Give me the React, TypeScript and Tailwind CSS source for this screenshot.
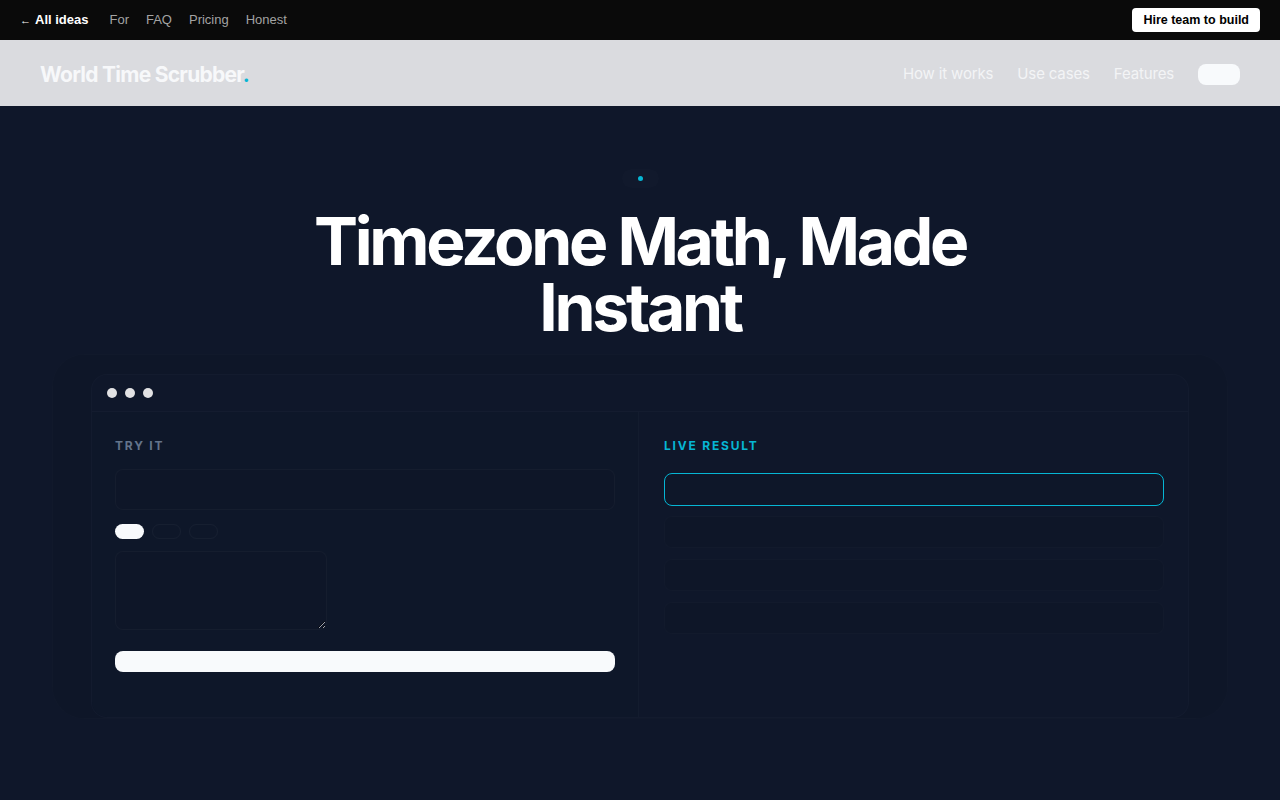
import React from "react";

const topLinks = ["For", "FAQ", "Pricing", "Honest"];
const navLinks = ["How it works", "Use cases", "Features"];

function TopBar() {
  return (
    <div className="h-10 bg-[#0a0a0a] flex items-center justify-between px-5 font-['Liberation_Sans',Arial,sans-serif] text-[13px]">
      <div className="flex items-center gap-[21px]">
        <a href="#" className="text-white font-bold">
          <span className="text-[11px] mr-1">←</span>All ideas
        </a>
        <div className="flex items-center gap-[17px] text-[#a3a3a3]">
          {topLinks.map((l) => (
            <a key={l} href="#">
              {l}
            </a>
          ))}
        </div>
      </div>
      <button className="h-6 px-[11px] rounded bg-white text-black text-[12.5px] font-bold">
        Hire team to build
      </button>
    </div>
  );
}

function Header() {
  return (
    <header className="h-[66px] bg-[#dadbdf] flex items-center justify-between px-10 font-['Inter',sans-serif]">
      <div className="pt-[3px] text-[21px] font-bold tracking-[-0.035em] text-[#f7f8fa]">
        World Time Scrubber<span className="text-[#06b6d4]">.</span>
      </div>
      <nav className="flex items-center gap-6 pt-[2px] text-[15px] text-[#f3f4f6] tracking-[-0.01em]">
        {navLinks.map((l) => (
          <a key={l} href="#">
            {l}
          </a>
        ))}
        <button className="w-[42px] h-[21px] rounded-lg bg-[#f8fafc]" />
      </nav>
    </header>
  );
}

function Demo() {
  return (
    <div className="relative mx-[52px] mt-[14px] rounded-[32px] bg-[#0e1628] border border-white/[0.015] px-[38px] pt-[19px]">
      <div className="rounded-2xl border border-white/[0.02] bg-[#0f172a] overflow-hidden">
        {/* window chrome */}
        <div className="h-[37px] flex items-center gap-2 px-[15px] border-b border-white/[0.025]">
          <span className="w-[10px] h-[10px] rounded-full bg-[#e2e2e4]" />
          <span className="w-[10px] h-[10px] rounded-full bg-[#e2e2e4]" />
          <span className="w-[10px] h-[10px] rounded-full bg-[#e2e2e4]" />
        </div>
        <div className="grid grid-cols-[547px_1fr]">
          <div className="border-r border-white/[0.025] px-[23px] pt-[28px] pb-[39px] bg-[#0e1729]">
            <div className="text-[12px] font-bold tracking-[0.15em] text-[#64748b] leading-none">
              TRY IT
            </div>
            <div className="mt-[17px] h-[41px] rounded-lg border border-white/[0.03] bg-[#0e1628]" />
            <div className="mt-[14px] flex gap-2">
              <span className="w-[29px] h-[15px] rounded-full bg-[#f8fafc]" />
              <span className="w-[29px] h-[15px] rounded-full border border-white/[0.035]" />
              <span className="w-[29px] h-[15px] rounded-full border border-white/[0.035]" />
            </div>
            <textarea className="mt-3 block w-[212px] h-[79px] rounded-lg border border-white/[0.03] bg-[#0e1628] outline-none" />
            <button className="mt-[21px] w-full h-[21px] rounded-lg bg-[#f8fafc]" />
          </div>
          <div className="pl-[25px] pr-6 pt-[28px]">
            <div className="text-[12px] font-bold tracking-[0.15em] text-[#06b6d4] leading-none">
              LIVE RESULT
            </div>
            <div className="mt-[21px] h-[33px] rounded-lg border border-[#06b6d4] bg-[#0e1729]" />
            <div className="mt-[10px] flex flex-col gap-[11px]">
              {[0, 1, 2].map((i) => (
                <div key={i} className="h-[32px] rounded-lg border border-white/[0.02] bg-[#0e1628]" />
              ))}
            </div>
          </div>
        </div>
      </div>
    </div>
  );
}

export default function App() {
  return (
    <div className="min-h-screen bg-[#0f172a] font-['Inter',sans-serif]">
      <TopBar />
      <Header />
      <main className="pb-24">
        <div className="flex justify-center pt-[63px]">
          <span className="px-4 py-[7px] rounded-full bg-white/[0.012] flex items-center">
            <span className="w-[5px] h-[5px] rounded-full bg-[#06b6d4]" />
          </span>
        </div>
        <h1 className="mt-[20px] text-center text-white text-[66px] font-bold leading-[66px] tracking-[-0.05em]">
          Timezone Math, Made
          <br />
          Instant
        </h1>
        <Demo />
      </main>
    </div>
  );
}
